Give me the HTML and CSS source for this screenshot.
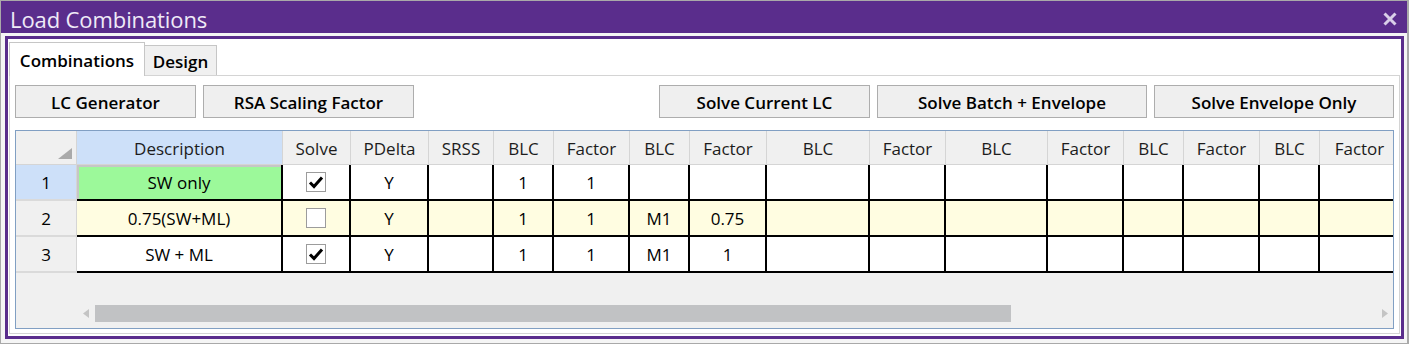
FILE: index.html
```html
<!DOCTYPE html>
<html>
<head>
<meta charset="utf-8">
<title>Load Combinations</title>
<link rel="stylesheet" href="styles.css">
</head>
<body>
<div class="window">
  <div class="titlebar">
    <span class="title">Load Combinations</span>
    <svg class="close" width="14" height="14" viewBox="0 0 14 14"><path d="M1.5 1.5 L12.5 12.5 M12.5 1.5 L1.5 12.5" stroke="#d9cfe9" stroke-width="3" fill="none"/></svg>
  </div>
  <div class="frame">
    <div class="tabs">
      <div class="tab active">Combinations</div>
      <div class="tab design">Design</div>
    </div>
    <div class="panel">
      <div class="toolbar">
        <div class="group">
          <div class="btn btn-gen">LC Generator</div>
          <div class="btn btn-rsa">RSA Scaling Factor</div>
        </div>
        <div class="group">
          <div class="btn btn-cur">Solve Current LC</div>
          <div class="btn btn-batch">Solve Batch + Envelope</div>
          <div class="btn btn-env">Solve Envelope Only</div>
        </div>
      </div>
      <div class="grid">
        <div class="rows">
          <div class="row">
            <div class="hc corner"><svg width="14" height="11" viewBox="0 0 14 11"><path d="M14 0 L14 11 L0 11 Z" fill="#aaaaaa"/></svg></div>
            <div class="hc sel">Description</div>
            <div class="hc">Solve</div>
            <div class="hc">PDelta</div>
            <div class="hc">SRSS</div>
            <div class="hc">BLC</div>
            <div class="hc">Factor</div>
            <div class="hc">BLC</div>
            <div class="hc">Factor</div>
            <div class="hc">BLC</div>
            <div class="hc">Factor</div>
            <div class="hc">BLC</div>
            <div class="hc">Factor</div>
            <div class="hc">BLC</div>
            <div class="hc">Factor</div>
            <div class="hc">BLC</div>
            <div class="hc">Factor</div>
          </div>
          <div class="row">
            <div class="rh sel">1</div>
            <div class="c cur">SW only</div>
            <div class="c"><span class="cb"><svg width="18" height="18" viewBox="0 0 18 18"><path d="M3 9.5 L7 13.5 L15 4.5" stroke="#000" stroke-width="3" fill="none"/></svg></span></div>
            <div class="c">Y</div>
            <div class="c"></div>
            <div class="c">1</div>
            <div class="c">1</div>
            <div class="c"></div>
            <div class="c"></div>
            <div class="c"></div>
            <div class="c"></div>
            <div class="c"></div>
            <div class="c"></div>
            <div class="c"></div>
            <div class="c"></div>
            <div class="c"></div>
            <div class="c"></div>
          </div>
          <div class="row alt">
            <div class="rh">2</div>
            <div class="c">0.75(SW+ML)</div>
            <div class="c"><span class="cb"></span></div>
            <div class="c">Y</div>
            <div class="c"></div>
            <div class="c">1</div>
            <div class="c">1</div>
            <div class="c">M1</div>
            <div class="c">0.75</div>
            <div class="c"></div>
            <div class="c"></div>
            <div class="c"></div>
            <div class="c"></div>
            <div class="c"></div>
            <div class="c"></div>
            <div class="c"></div>
            <div class="c"></div>
          </div>
          <div class="row">
            <div class="rh">3</div>
            <div class="c">SW + ML</div>
            <div class="c"><span class="cb"><svg width="18" height="18" viewBox="0 0 18 18"><path d="M3 9.5 L7 13.5 L15 4.5" stroke="#000" stroke-width="3" fill="none"/></svg></span></div>
            <div class="c">Y</div>
            <div class="c"></div>
            <div class="c">1</div>
            <div class="c">1</div>
            <div class="c">M1</div>
            <div class="c">1</div>
            <div class="c"></div>
            <div class="c"></div>
            <div class="c"></div>
            <div class="c"></div>
            <div class="c"></div>
            <div class="c"></div>
            <div class="c"></div>
            <div class="c"></div>
          </div>
        </div>
        <div class="hscroll">
          <div class="arrow-box"><svg width="6" height="9" viewBox="0 0 6 9"><path d="M6 0 L6 9 L0 4.5 Z" fill="#c4c4c4"/></svg></div>
          <div class="thumb"></div>
          <div class="track"></div>
          <div class="arrow-box right"><svg width="6" height="9" viewBox="0 0 6 9"><path d="M0 0 L0 9 L6 4.5 Z" fill="#c4c4c4"/></svg></div>
        </div>
      </div>
    </div>
  </div>
</div>
</body>
</html>
```
FILE: styles.css
```css
body {
  margin: 0;
  background: #ffffff;
  font-family: "Open Sans", "Noto Sans", sans-serif;
  color: #000;
}

.window {
  width: 1409px;
  height: 344px;
  box-sizing: border-box;
  border: 1px solid #a9a9a9;
  border-right-width: 2px;
  background: #f5f5f5;
  display: flex;
  flex-direction: column;
}

.titlebar {
  height: 32px;
  flex: none;
  background: #5a2d8c;
  display: flex;
  align-items: center;
  justify-content: space-between;
  padding: 0 10px 0 9px;
  color: #efeaf7;
}

.title {
  font-size: 22px;
  line-height: 32px;
  padding-top: 3px;
  letter-spacing: -0.1px;
}

.close {
  margin-top: 4px;
}

.frame {
  margin: 3px 3px 4px 4px;
  height: 303px;
  box-sizing: border-box;
  border: 3px solid #5a2d8c;
  background: #fff;
  padding: 3px 1px 2px;
  display: flex;
  flex-direction: column;
}

.tabs {
  display: flex;
  align-items: flex-end;
  height: 33px;
  flex: none;
  position: relative;
  z-index: 1;
}

.tab {
  box-sizing: border-box;
  border: 1px solid #c6c6c6;
  border-bottom: none;
  font-weight: 600;
  font-size: 17px;
  display: flex;
  align-items: center;
  justify-content: center;
}

.tab.active {
  width: 136px;
  height: 34px;
  margin-bottom: -1px;
  background: #fff;
  padding-top: 1px;
}

.tab.design {
  width: 72px;
  height: 30px;
  border-left: none;
  background: #f0f0f0;
  padding-top: 1px;
}

.panel {
  flex: 1;
  border: 1px solid #d4d4d4;
  padding: 9px 5px 4px;
  background: #fff;
  display: flex;
  flex-direction: column;
}

.toolbar {
  display: flex;
  justify-content: space-between;
  height: 33px;
  flex: none;
}

.group {
  display: flex;
  gap: 7px;
}

.btn {
  box-sizing: border-box;
  height: 33px;
  border: 1px solid #adadad;
  background: #efefef;
  font-weight: 600;
  font-size: 17px;
  display: flex;
  align-items: center;
  justify-content: center;
  padding-top: 2px;
}

.btn-gen { width: 181px; }
.btn-rsa { width: 211px; }
.btn-cur { width: 211px; }
.btn-batch { width: 270px; }
.btn-env { width: 240px; }

.grid {
  margin-top: 12px;
  height: 199px;
  box-sizing: border-box;
  border: 1px solid #819fc3;
  background: #f0f0f0;
  overflow: hidden;
  flex: none;
}

.rows {
  width: 1377px;
  overflow: hidden;
}

.row {
  display: grid;
  grid-template-columns: 61px 206px 68px 78px 65px 60px 76px 60px 77px 103px 76px 102px 76px 60px 76px 60px 80px;
}

.hc {
  height: 34px;
  box-sizing: border-box;
  border-right: 1px solid #d5d5d5;
  border-bottom: 1px solid #d5d5d5;
  background: #f0f0f0;
  display: flex;
  align-items: center;
  justify-content: center;
  font-size: 17px;
  color: #1c1c1c;
  padding-top: 2px;
}

.hc.sel {
  background: #cde0f9;
}

.hc.corner {
  justify-content: flex-end;
  align-items: flex-end;
  padding: 0 4px 5px 0;
}

.rh {
  height: 36px;
  box-sizing: border-box;
  border-right: 1px solid #d5d5d5;
  border-bottom: 2px solid #dadada;
  background: #f0f0f0;
  display: flex;
  align-items: center;
  justify-content: center;
  font-size: 17px;
  padding-top: 1px;
}

.rh.sel {
  background: #cde0f9;
}

.c {
  height: 36px;
  box-sizing: border-box;
  border-right: 2px solid #000;
  border-bottom: 2px solid #000;
  background: #fff;
  display: flex;
  align-items: center;
  justify-content: center;
  font-size: 17px;
  padding-top: 1px;
}

.row.alt .c {
  background: #fffde1;
}

.c.cur {
  background: #9cf99a;
  box-shadow: inset 2px 2px 0 #c6c6c6;
}

.cb {
  width: 20px;
  height: 20px;
  box-sizing: border-box;
  border: 1px solid #9c9c9c;
  background: #fff;
  display: flex;
  align-items: center;
  justify-content: center;
  margin-top: -1px;
}

.hscroll {
  margin-top: 32px;
  height: 17px;
  display: flex;
  padding-left: 60px;
}

.arrow-box {
  width: 19px;
  display: flex;
  align-items: center;
  justify-content: center;
}

.arrow-box.right {
  width: 17px;
}

.thumb {
  width: 916px;
  background: #c1c2c4;
}

.track {
  flex: 1;
}
```
